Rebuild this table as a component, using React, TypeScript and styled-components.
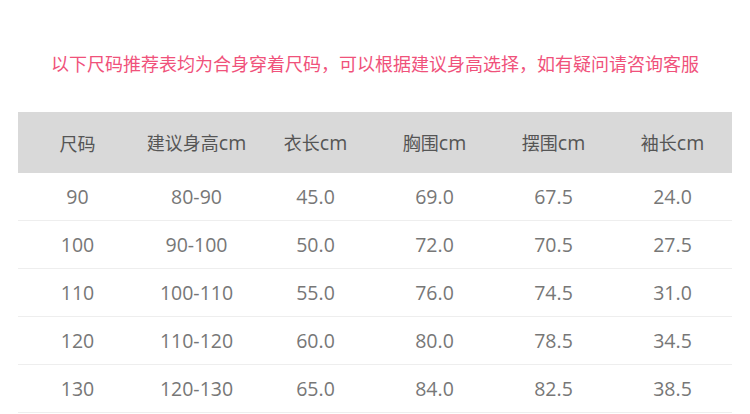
import React from "react";
import styled, { createGlobalStyle } from "styled-components";

const Global = createGlobalStyle`
  html, body { margin: 0; padding: 0; background: #fff; }
  body { font-family: "Open Sans", "Noto Sans CJK SC", sans-serif; }
`;

const Page = styled.div`
  width: 750px;
  display: flex;
  flex-direction: column;
  align-items: center;
`;

const Notice = styled.p`
  margin: 51px 0 0;
  height: 24px;
  line-height: 24px;
  font-size: 18px;
  color: #f0527b;
  font-family: "Noto Sans CJK SC", sans-serif;
  text-align: center;
  white-space: nowrap;
`;

const Table = styled.div`
  margin-top: 37px;
  width: 714px;
  display: flex;
  flex-direction: column;
`;

const HeadRow = styled.div`
  display: grid;
  grid-template-columns: repeat(6, 1fr);
  height: 61px;
  background: #d9d9d9;
  align-items: center;
`;

const Row = styled.div`
  display: grid;
  grid-template-columns: repeat(6, 1fr);
  height: 47px;
  border-bottom: 1px solid #eeeeee;
  align-items: center;
`;

const HeadCell = styled.div`
  text-align: center;
  font-size: 18px;
  color: #555;
  font-family: "Noto Sans CJK SC", sans-serif;
  span { font-family: "Open Sans", sans-serif; font-size: 19.5px; }
`;

const Cell = styled.div`
  text-align: center;
  font-size: 19.5px;
  color: #777;
  font-family: "Open Sans", sans-serif;
`;

const heads: [string, string][] = [
  ["尺码", ""],
  ["建议身高", "cm"],
  ["衣长", "cm"],
  ["胸围", "cm"],
  ["摆围", "cm"],
  ["袖长", "cm"],
];

const rows = [
  ["90", "80-90", "45.0", "69.0", "67.5", "24.0"],
  ["100", "90-100", "50.0", "72.0", "70.5", "27.5"],
  ["110", "100-110", "55.0", "76.0", "74.5", "31.0"],
  ["120", "110-120", "60.0", "80.0", "78.5", "34.5"],
  ["130", "120-130", "65.0", "84.0", "82.5", "38.5"],
];

export default function App() {
  return (
    <Page>
      <Global />
      <Notice>以下尺码推荐表均为合身穿着尺码，可以根据建议身高选择，如有疑问请咨询客服</Notice>
      <Table>
        <HeadRow>
          {heads.map(([zh, unit]) => (
            <HeadCell key={zh}>
              {zh}
              {unit && <span>{unit}</span>}
            </HeadCell>
          ))}
        </HeadRow>
        {rows.map((r) => (
          <Row key={r[0]}>
            {r.map((c, i) => (
              <Cell key={i}>{c}</Cell>
            ))}
          </Row>
        ))}
      </Table>
    </Page>
  );
}
